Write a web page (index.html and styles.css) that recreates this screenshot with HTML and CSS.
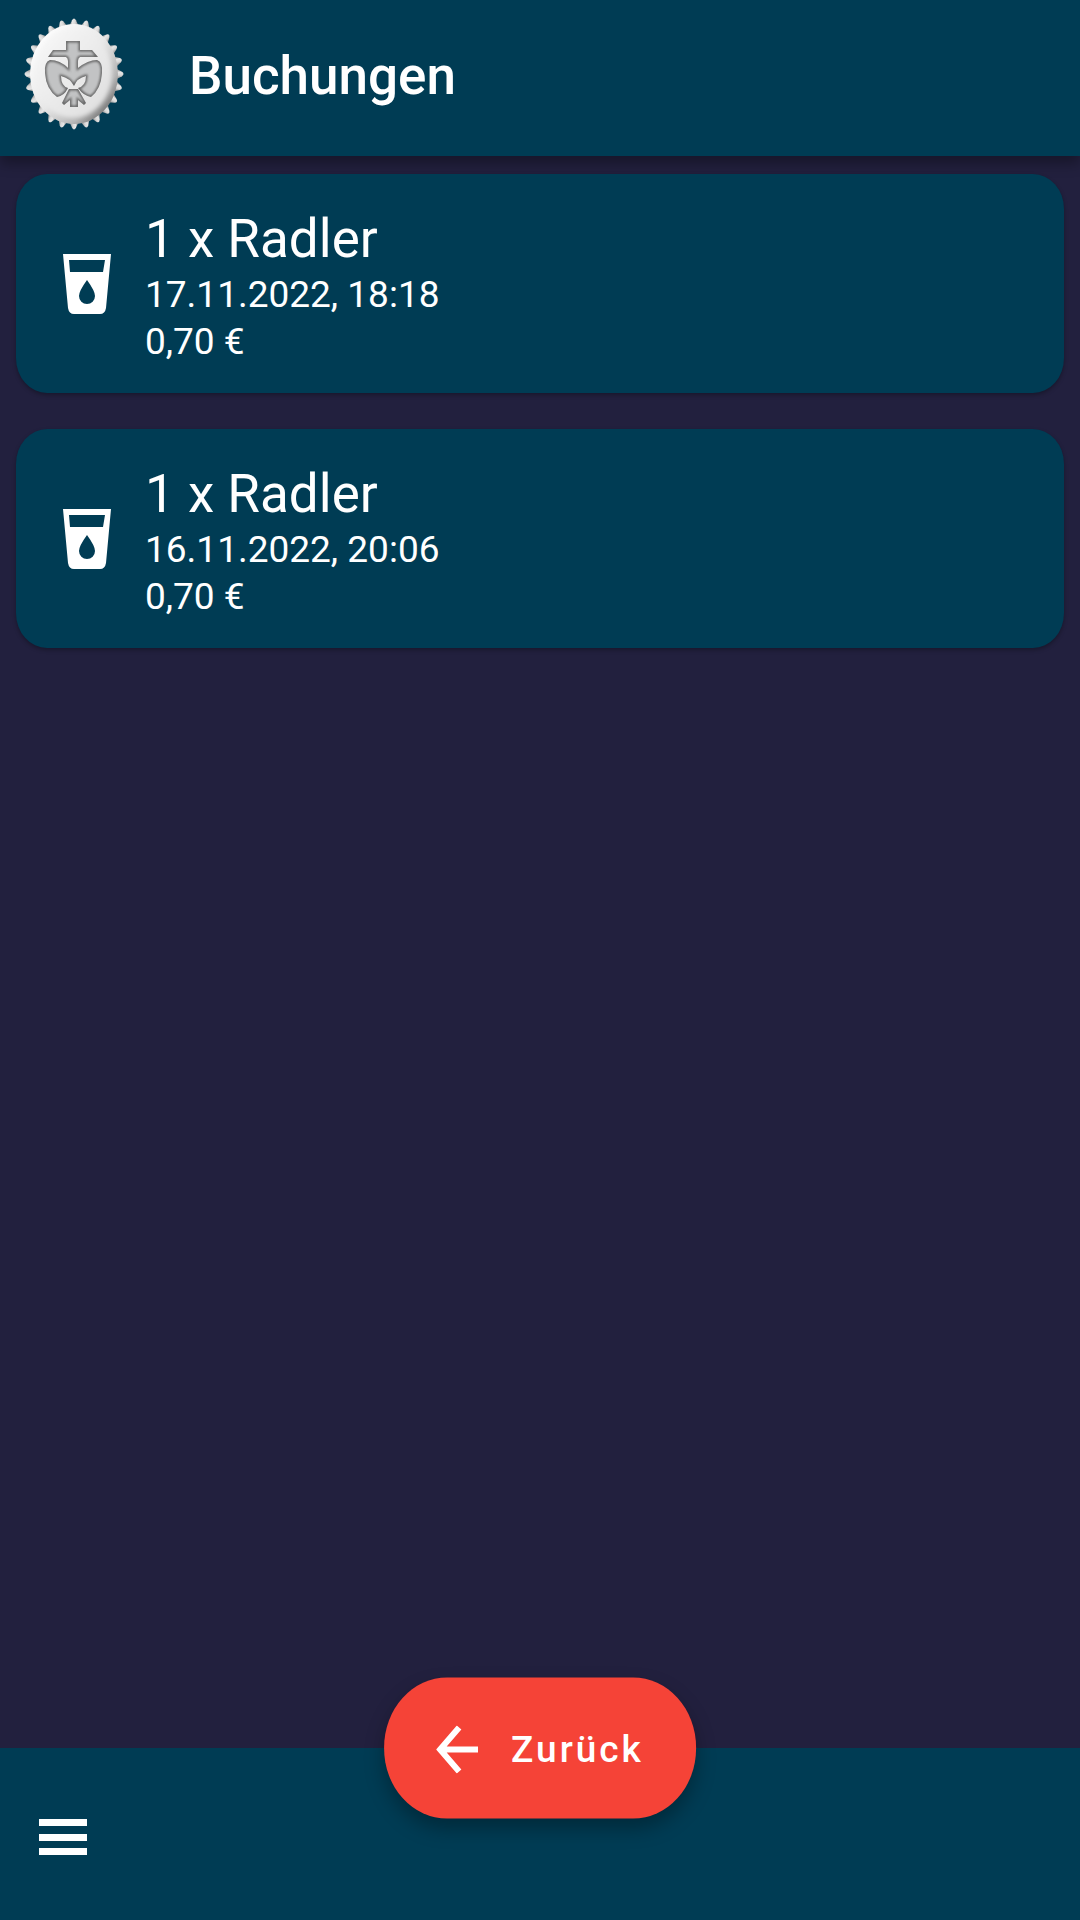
FILE: index.html
```html
<!DOCTYPE html>
<html lang="de">
<head>
<meta charset="utf-8">
<meta name="viewport" content="width=device-width, initial-scale=1">
<title>Buchungen</title>
<link rel="stylesheet" href="styles.css">
</head>
<body>
<header class="app-bar">
  <svg class="logo" viewBox="0 0 100 112" aria-hidden="true">
    <defs>
      <linearGradient id="metal" x1="0" y1="0" x2="1" y2="0">
        <stop offset="0" stop-color="#777"/><stop offset="0.35" stop-color="#e6e6e6"/><stop offset="0.6" stop-color="#d8d8d8"/><stop offset="1" stop-color="#777"/>
      </linearGradient>
      <linearGradient id="cap" x1="0.1" y1="0.1" x2="0.9" y2="0.9">
        <stop offset="0" stop-color="#fff"/><stop offset="0.5" stop-color="#e8e8e8"/><stop offset="0.8" stop-color="#b5b5b5"/><stop offset="1" stop-color="#6c6c6c"/>
      </linearGradient>
      <linearGradient id="face" x1="0" y1="0" x2="1" y2="1">
        <stop offset="0" stop-color="#fafafa"/><stop offset="1" stop-color="#dcdcdc"/>
      </linearGradient>
      <filter id="soft" x="-20%" y="-20%" width="140%" height="140%"><feGaussianBlur stdDeviation="2"/></filter>
      <filter id="edge" x="-20%" y="-20%" width="140%" height="140%"><feGaussianBlur stdDeviation="1"/></filter>
      <path id="tooth" fill="url(#metal)" d="M-5 -42L-2 -48Q0 -51 2 -48L5 -42Z"/>
      <g id="quarter">
        <use href="#tooth"/><use href="#tooth" transform="rotate(15)"/><use href="#tooth" transform="rotate(30)"/>
        <use href="#tooth" transform="rotate(45)"/><use href="#tooth" transform="rotate(60)"/><use href="#tooth" transform="rotate(75)"/>
      </g>
      <g id="emblem">
        <path d="M42 23H56V32H68L74 39H56Q54 40 54 43V50Q64 42 73 42Q79 44 78 55Q77 71 67 79Q60 78 54 70Q62 68 62 58Q53 60 50 68Q46 60 37 58Q37 68 44 70Q40 78 33 79Q22 71 21 55Q20 44 26 42Q36 42 44 50V43Q44 40 42 39H24L29 32H42Z"/>
        <path d="M45 71H54L62 85L60 87L54 82V89H46V82L40 87L38 85Z"/>
      </g>
      <clipPath id="relief"><use href="#emblem"/><path d="M42 23H56V32H68L74 39H56Q54 40 54 43V50Q64 42 73 42Q79 44 78 55Q77 71 67 79Q60 78 54 70Q62 68 62 58Q53 60 50 68Q46 60 37 58Q37 68 44 70Q40 78 33 79Q22 71 21 55Q20 44 26 42Q36 42 44 50V43Q44 40 42 39H24L29 32H42ZM45 71H54L62 85L60 87L54 82V89H46V82L40 87L38 85Z"/></clipPath>
    </defs>
    <g transform="translate(50 56) scale(1 1.12)">
      <use href="#quarter"/><use href="#quarter" transform="rotate(90)"/><use href="#quarter" transform="rotate(180)"/><use href="#quarter" transform="rotate(270)"/>
    </g>
    <ellipse cx="50" cy="56" rx="44" ry="50" fill="url(#cap)"/>
    <ellipse cx="49" cy="55" rx="39" ry="45" fill="url(#face)" filter="url(#soft)"/>
    <use href="#emblem" fill="#c2c3c4"/>
    <g clip-path="url(#relief)">
      <use href="#emblem" fill="none" stroke="#666" stroke-width="3" filter="url(#edge)"/>
    </g>
  </svg>
  <h1 class="title">Buchungen</h1>
</header>
<main class="bookings">
  <article class="card">
    <svg class="glass" viewBox="0 0 48 60" aria-hidden="true"><path fill="#fff" fill-rule="evenodd" d="M0 0H48L43 54Q42 60 37 60H11Q6 60 5 54ZM6 6L7 18H40L42 6ZM24 26Q16 37 16 42A8 8 0 0 0 32 42Q32 37 24 26Z"/></svg>
    <div class="details">
      <h2 class="name">1 x Radler</h2>
      <p class="line">17.11.2022, 18:18</p>
      <p class="line">0,70 €</p>
    </div>
  </article>
  <article class="card">
    <svg class="glass" viewBox="0 0 48 60" aria-hidden="true"><path fill="#fff" fill-rule="evenodd" d="M0 0H48L43 54Q42 60 37 60H11Q6 60 5 54ZM6 6L7 18H40L42 6ZM24 26Q16 37 16 42A8 8 0 0 0 32 42Q32 37 24 26Z"/></svg>
    <div class="details">
      <h2 class="name">1 x Radler</h2>
      <p class="line">16.11.2022, 20:06</p>
      <p class="line">0,70 €</p>
    </div>
  </article>
</main>
<footer class="bottom-bar">
  <button class="menu" type="button" aria-label="Menü">
    <svg class="menu-icon" viewBox="0 0 48 36" aria-hidden="true"><path fill="#fff" d="M0 0H48V7H0ZM0 15H48V22H0ZM0 29H48V36H0Z"/></svg>
  </button>
  <button class="back" type="button">
    <svg class="arrow" viewBox="0 0 42 48" aria-hidden="true"><path fill="none" stroke="#fff" stroke-width="6" d="M42 24H4M23 2L4 24L23 46"/></svg>
    <span>Zurück</span>
  </button>
</footer>
</body>
</html>
```
FILE: styles.css
```css
* { box-sizing: border-box; }

body {
  margin: 0;
  min-height: 100vh;
  display: flex;
  flex-direction: column;
  background: #22203e;
  color: #fff;
  font-family: Roboto, "Liberation Sans", sans-serif;
}

h1, h2, p { margin: 0; }

.app-bar {
  display: flex;
  align-items: center;
  gap: 65px;
  height: 156px;
  padding: 0 24px 8px;
  background: #003c54;
  box-shadow: 0 8px 12px rgba(0, 0, 0, 0.3);
}

.logo { width: 100px; height: 112px; }

.title {
  padding-top: 4px;
  font-size: 53px;
  font-weight: 500;
  line-height: 64px;
}

.bookings {
  flex: 1;
  display: flex;
  flex-direction: column;
  gap: 36px;
  padding: 18px 16px;
}

.card {
  display: flex;
  align-items: center;
  gap: 34px;
  min-height: 219px;
  padding: 28px 47px;
  border-radius: 31px / 35px;
  background: #003c54;
  box-shadow: 0 2px 4px rgba(0, 0, 0, 0.3);
}

.glass { width: 48px; height: 60px; }

.details { padding-top: 4px; }

.name {
  font-size: 53px;
  font-weight: 400;
  line-height: 64px;
}

.line {
  font-size: 37px;
  line-height: 47px;
}

.bottom-bar {
  position: relative;
  height: 172px;
  padding: 59px 27px;
  background: #003c54;
}

button {
  border: 0;
  color: inherit;
  font: inherit;
  cursor: pointer;
}

.menu {
  display: flex;
  padding: 12px;
  background: none;
}

.menu-icon { width: 48px; height: 36px; }

/* Floating action button docked on the bar's top edge */
.back {
  position: absolute;
  top: 0;
  left: 50%;
  transform: translate(-50%, -50%);
  display: flex;
  align-items: center;
  gap: 33px;
  height: 141px;
  padding: 2px 52px 0;
  border-radius: 63px / 70px;
  background: #f54337;
  box-shadow: 0 10px 20px rgba(0, 0, 0, 0.3);
  font-size: 37px;
  font-weight: 500;
  letter-spacing: 3px;
}

.arrow { width: 42px; height: 48px; }
```
